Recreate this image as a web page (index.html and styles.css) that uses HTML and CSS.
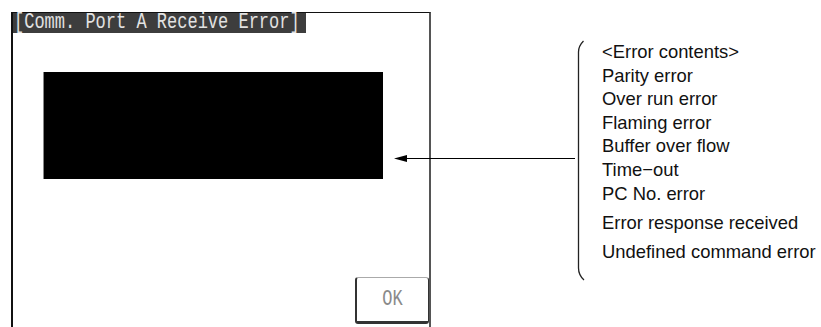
FILE: index.html
```html
<!DOCTYPE html>
<html lang="en">
<head>
    <meta charset="UTF-8">
    <meta name="viewport" content="width=device-width, initial-scale=1.0">
    <title>Comm. Port A Receive Error</title>
    <link rel="stylesheet" href="styles.css">
</head>
<body>

    <div class="page">
        <!-- Touch panel screen -->
        <div class="screen">
            <div class="title-bar"><span class="lcd">[Comm. Port A Receive Error]</span></div>
            <div class="message-box"></div>
            <div class="ok-button"><span class="lcd">OK</span></div>
        </div>

        <!-- Annotation: list of error contents -->
        <div class="notes">
            <svg class="brace" width="12" height="244" viewBox="0 0 12 244">
                <path d="M8.5 3 Q3.5 8 3.5 14 L3.5 230 Q3.5 237 9 242" fill="none" stroke="#222" stroke-width="1.3"/>
            </svg>
            <ul class="error-list">
                <li>&lt;Error contents&gt;</li>
                <li>Parity error</li>
                <li>Over run error</li>
                <li>Flaming error</li>
                <li>Buffer over flow</li>
                <li>Time&minus;out</li>
                <li>PC No. error</li>
                <li class="spaced">Error response received</li>
                <li class="spaced">Undefined command error</li>
            </ul>
        </div>

        <!-- Arrow pointing at the message box -->
        <svg class="arrow" width="821" height="327" viewBox="0 0 821 327">
            <line x1="404" y1="158.5" x2="575" y2="158.5" stroke="#000" stroke-width="1"/>
            <polygon points="394,158.5 407,155 407,162" fill="#000"/>
        </svg>
    </div>

</body>
</html>
```

FILE: styles.css
```css
body {
    margin: 0;
    background-color: #fff;
    color: #111;
}

.page {
    position: relative;
    display: flex;
    width: 821px;
    height: 327px;
    overflow: hidden;
}

.screen {
    box-sizing: border-box;
    display: flex;
    flex-direction: column;
    width: 420px;
    height: 315px;
    margin: 12px 0 0 11px;
    border-top: 1px solid #111;
    border-left: 2px solid #111;
    border-right: 2px solid #555;
}

.lcd {
    display: inline-block;
    font-family: "Liberation Mono", monospace;
    font-size: 17px;
    line-height: 14px;
    transform: scaleY(1.3);
}

.title-bar {
    box-sizing: border-box;
    display: flex;
    align-items: center;
    width: 293px;
    height: 20px;
    padding-left: 1px;
    background-color: #3d3d3d;
    color: #e2e2e2;
    white-space: nowrap;
}

.message-box {
    width: 340px;
    height: 107px;
    margin: 39px 0 0 30px;
    box-sizing: border-box;
    background-color: #000;
    border-left: 1px solid #888;
}

.ok-button {
    box-sizing: border-box;
    display: flex;
    align-items: center;
    justify-content: center;
    align-self: flex-end;
    width: 74px;
    height: 47px;
    margin-top: auto;
    margin-bottom: 3px;
    border-top: 1px solid #aaa;
    border-left: 2px solid #333;
    border-right: 1px solid #333;
    border-bottom: 3px solid #333;
    border-radius: 3px;
    color: #8a8a8a;
}

.notes {
    display: flex;
    margin: 38px 0 0 144px;
}

.brace {
    display: block;
}

.error-list {
    list-style: none;
    margin: 2px 0 0 15px;
    padding: 0;
    font-family: "Liberation Sans", Arial, sans-serif;
    font-size: 18.4px;
    line-height: 23.6px;
    white-space: nowrap;
}

.error-list .spaced {
    margin-top: 5.5px;
    line-height: 24px;
}

.arrow {
    position: absolute;
    top: 0;
    left: 0;
    pointer-events: none;
}
```
